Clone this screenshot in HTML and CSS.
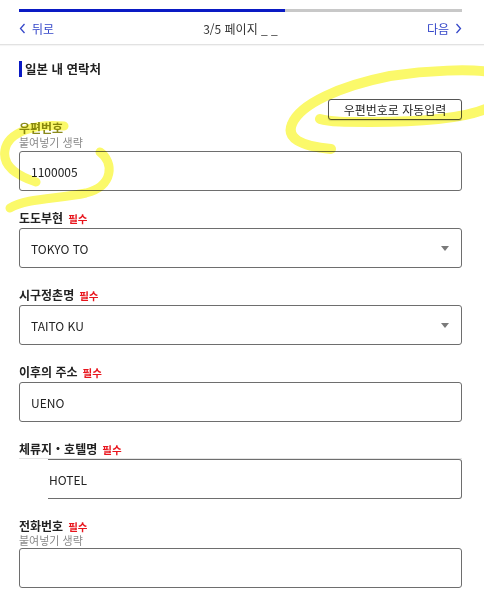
FILE: index.html
```html
<!DOCTYPE html>
<html lang="ko">
<head>
    <meta charset="UTF-8">
    <meta name="viewport" content="width=device-width, initial-scale=1.0">
    <title>일본 내 연락처</title>
    <link rel="stylesheet" href="styles.css">
</head>
<body>
    <header class="top">
        <div class="progress"><div class="progress-fill" style="width: 60%;"></div></div>
        <nav class="steps">
            <a href="#" class="step-link">
                <svg width="7" height="11" viewBox="0 0 7 11"><path d="M5.5 1 L1.5 5.5 L5.5 10" fill="none" stroke="currentColor" stroke-width="1.3"/></svg>
                뒤로
            </a>
            <span class="step-count">3/5 페이지 _ _</span>
            <a href="#" class="step-link step-next">
                다음
                <svg width="7" height="11" viewBox="0 0 7 11"><path d="M1.5 1 L5.5 5.5 L1.5 10" fill="none" stroke="currentColor" stroke-width="1.3"/></svg>
            </a>
        </nav>
    </header>

    <main class="form">
        <h2 class="section-title">일본 내 연락처</h2>

        <div class="auto-row">
            <button type="button" class="auto-btn">우편번호로 자동입력</button>
        </div>

        <div class="field field-first">
            <label class="label label-marked">우편번호</label>
            <div class="hint">붙여넣기 생략</div>
            <div class="box">1100005</div>
        </div>

        <div class="field">
            <label class="label">도도부현 <span class="req">필수</span></label>
            <div class="box select">TOKYO TO <span class="caret"></span></div>
        </div>

        <div class="field">
            <label class="label">시구정촌명 <span class="req">필수</span></label>
            <div class="box select">TAITO KU <span class="caret"></span></div>
        </div>

        <div class="field">
            <label class="label">이후의 주소 <span class="req">필수</span></label>
            <div class="box">UENO</div>
        </div>

        <div class="field">
            <label class="label">체류지・호텔명 <span class="req">필수</span></label>
            <div class="clipped">
                <div class="box box-clipped">HOTEL</div>
            </div>
        </div>

        <div class="field field-phone">
            <label class="label">전화번호 <span class="req">필수</span></label>
            <div class="hint">붙여넣기 생략</div>
            <div class="box"></div>
        </div>
    </main>

    <!-- highlighter marks drawn over the screenshot -->
    <svg class="marks" width="484" height="609" viewBox="0 0 484 609">
        <path d="M64 126 C36 123 8 132 5 150 C2 166 18 176 36 182" fill="none" stroke="#fbf96a" stroke-width="9" stroke-linecap="round"/>
        <path d="M100 152 C114 162 114 186 86 193 C58 199 26 198 10 208" fill="none" stroke="#fbf96a" stroke-width="9" stroke-linecap="round"/>
        <path d="M331 149 C300 146 286 138 292 124 C300 104 340 86 390 76 C430 70 470 69 490 72 M492 106 C470 118 420 122 370 122 C345 122 330 122 320 119" fill="none" stroke="#fbf96a" stroke-width="10" stroke-linecap="round"/>
    </svg>
</body>
</html>
```

FILE: styles.css
```css
body {
    margin: 0;
    background-color: #fff;
    font-family: "Noto Sans CJK KR", "Noto Sans", sans-serif;
    color: #222;
}
.top {
    padding: 9px 22px 0 19px;
    border-bottom: 1px solid #e2e2e2;
    box-shadow: 0 1px 1px rgba(0,0,0,0.04);
}
.progress {
    height: 3px;
    background-color: #c8c8c8;
}
.progress-fill {
    height: 3px;
    background-color: #0a1ac4;
}
.steps {
    display: grid;
    grid-template-columns: 1fr auto 1fr;
    align-items: center;
    height: 32px;
    font-size: 12px;
}
.step-link {
    display: flex;
    align-items: center;
    gap: 6px;
    color: #3547c9;
    text-decoration: none;
}
.step-next {
    justify-self: end;
}
.step-count {
    color: #333;
}
.form {
    padding: 16px 22px 20px 19px;
}
.section-title {
    margin: 0;
    border-left: 3px solid #0a1ac4;
    padding-left: 3px;
    font-size: 12.5px;
    line-height: 16px;
    font-weight: bold;
    color: #222;
}
.auto-row {
    display: flex;
    justify-content: flex-end;
    margin-top: 22px;
}
.auto-btn {
    font-family: inherit;
    font-size: 12px;
    line-height: 18px;
    width: 134px;
    height: 21px;
    padding: 0;
    background-color: #fff;
    color: #222;
    border: 1px solid #555;
    border-radius: 3px;
    box-shadow: 0 1px 1px rgba(0,0,0,0.15);
}
.field {
    margin-top: 20px;
}
.field-first {
    margin-top: 1px;
}
.field-phone {
    margin-top: 20px;
}
.label {
    display: flex;
    align-items: baseline;
    height: 14px;
    font-size: 12px;
    line-height: 14px;
    font-weight: bold;
    color: #222;
    margin-bottom: 3px;
}
.label-marked {
    color: #8a8a1c;
    margin-bottom: 0;
}
.req {
    color: #e8141c;
    font-size: 10.5px;
    margin-left: 5px;
}
.hint {
    height: 14px;
    font-size: 11px;
    line-height: 14px;
    color: #8a8a8a;
    margin-bottom: 2px;
}
.field-phone .hint {
    margin-bottom: 1px;
}
.field-phone .label {
    margin-bottom: 0;
}
.box {
    box-sizing: border-box;
    height: 40px;
    border: 1px solid #6e6e6e;
    border-radius: 3px;
    padding: 0 11px;
    display: flex;
    align-items: center;
    font-size: 12px;
    color: #222;
}
.select {
    justify-content: space-between;
}
.caret {
    width: 0;
    height: 0;
    border-left: 4px solid transparent;
    border-right: 4px solid transparent;
    border-top: 5px solid #7a7a7a;
    margin-right: 1px;
}
.clipped {
    border-top: 1px solid #e4e4e4;
    margin-top: -1px;
}
.box-clipped {
    margin-left: 29px;
    border-left: none;
    border-top-left-radius: 0;
    border-bottom-left-radius: 0;
    padding-left: 1px;
}
.marks {
    position: absolute;
    left: 0;
    top: 0;
    pointer-events: none;
    mix-blend-mode: multiply;
}
```
